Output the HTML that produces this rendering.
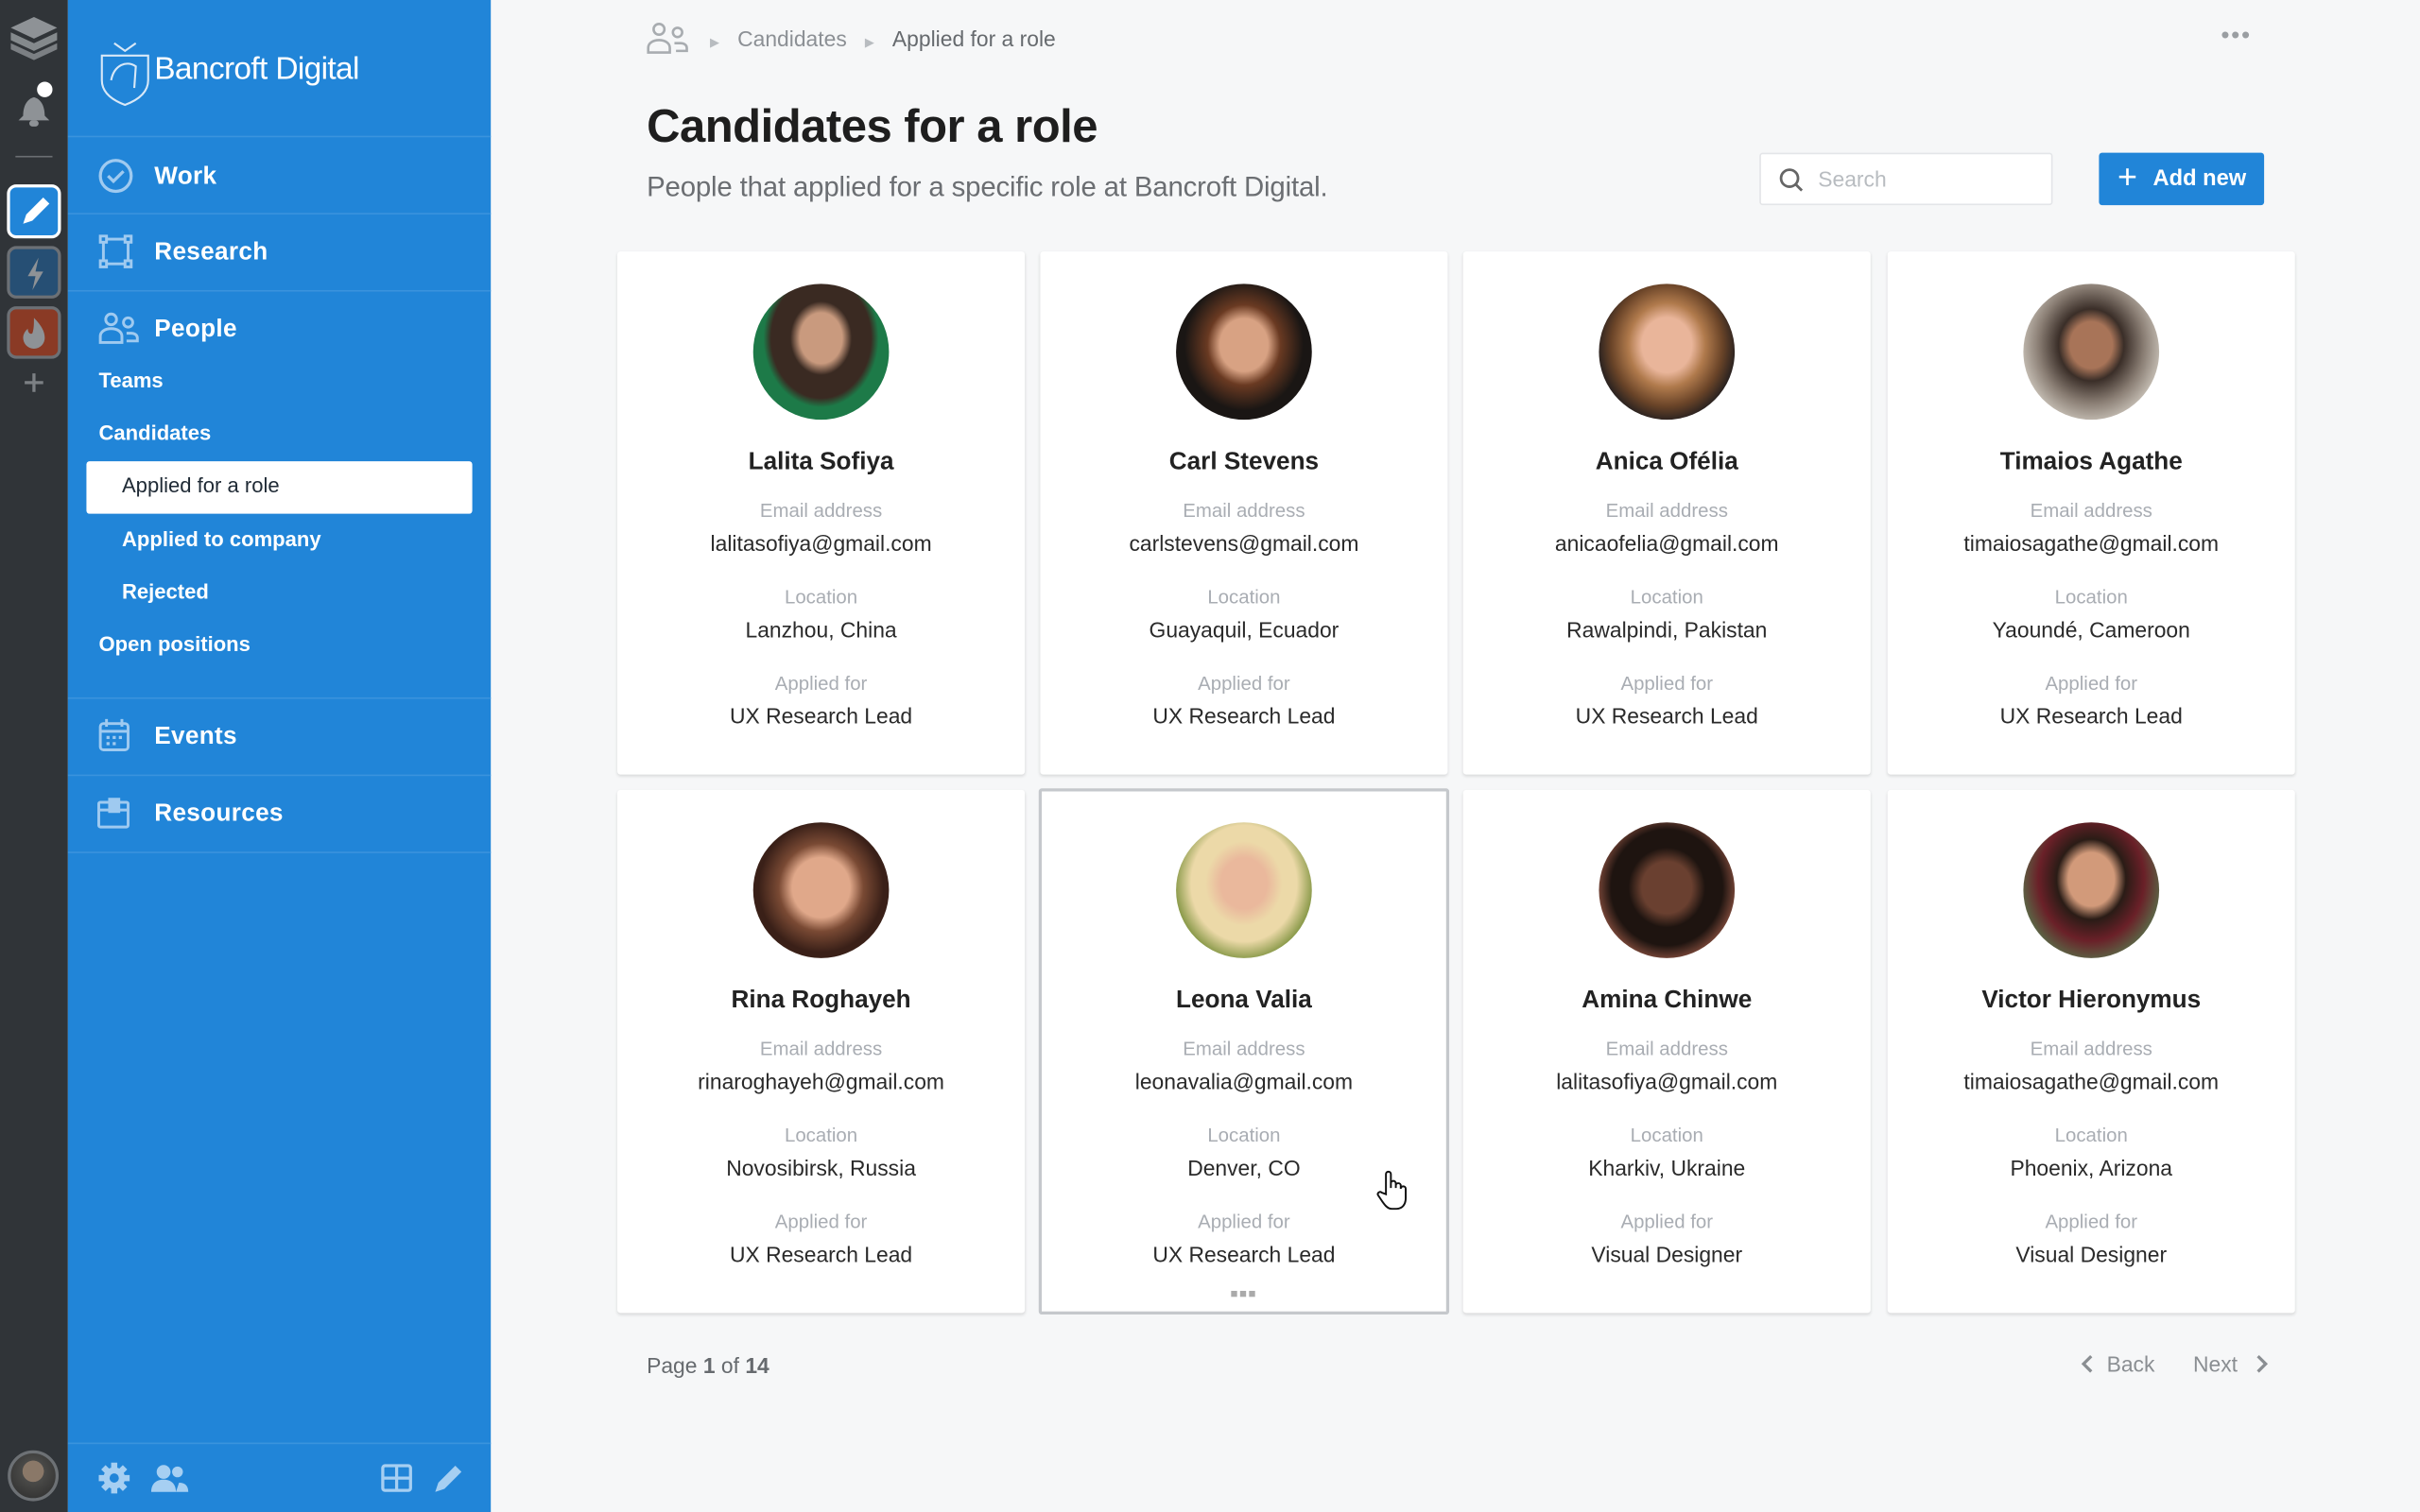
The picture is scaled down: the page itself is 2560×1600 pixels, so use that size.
<!DOCTYPE html>
<html><head><meta charset="utf-8"><style>
*{box-sizing:border-box;margin:0;padding:0}
html,body{width:2560px;height:1600px;overflow:hidden;background:#f6f7f8}
#w{position:absolute;left:0;top:0;width:1568px;height:980px;transform:scale(1.632653);transform-origin:0 0;font-family:"Liberation Sans",sans-serif;background:#f6f7f8}
.rail{position:absolute;left:0;top:0;width:44px;height:980px;background:#303438}
.side{position:absolute;left:44px;top:0;width:274px;height:980px;background:#2185d8;color:#fff}
.sep{position:absolute;left:0;width:274px;height:1px;background:#3a93dd}
.nav{position:absolute;left:56px;font-size:16px;font-weight:bold;letter-spacing:.2px}
.sub{position:absolute;left:20px;font-size:13.5px;font-weight:bold}
.sel{position:absolute;left:12px;top:299px;width:250px;height:34px;background:#fff;border-radius:2px}
.card{position:absolute;width:264px;height:339px;background:#fff;border-radius:2px;box-shadow:0 1px 2px rgba(0,0,0,.12);text-align:center}
.av{position:absolute;left:88px;top:21px;width:88px;height:88px;border-radius:50%}
.nm{position:absolute;left:0;right:0;top:128px;font-size:16px;font-weight:bold;color:#222}
.lb{position:absolute;left:0;right:0;font-size:12.5px;color:#a9adb3}
.vl{position:absolute;left:0;right:0;font-size:14px;color:#2a2a2a}
</style></head><body><div id="w">
<div class="rail">
<svg width="44" height="300" style="position:absolute;left:0;top:0">
<g fill="#8e9296"><path d="M22 11l15 7-15 7-15-7z"/><path d="M7 21l15 7 15-7v5l-15 7-15-7z" opacity=".9"/><path d="M7 28l15 7 15-7v4l-15 7-15-7z" opacity=".8"/>
<path d="M15 75c0-7 3-11 7-12 4 1 7 5 7 12l3 3H12z"/><rect x="19" y="78" width="6" height="4" rx="2"/></g>
<circle cx="29" cy="58" r="5" fill="#fff"/>
<rect x="10" y="101" width="24" height="1" fill="#6a6e72"/>
<rect x="5.5" y="120.5" width="33" height="33" rx="5" fill="#2185d8" stroke="#fff" stroke-width="2"/>
<path d="M15 145l2-6 11-11 4 4-11 11z" fill="#fff"/>
<rect x="5.5" y="160.5" width="33" height="32" rx="5" fill="#264f74" stroke="#6c7075" stroke-width="2"/>
<path d="M25 167l-7 12h5l-2 9 7-12h-5z" fill="#8e9296"/>
<rect x="5.5" y="199.5" width="33" height="32" rx="5" fill="#8a3a25" stroke="#6c7075" stroke-width="2"/>
<path d="M22 206c5 5 7 9 7 13a7 7 0 0 1-14 0c0-3 2-5 3-6 0 3 2 4 3 3 1-3 1-6 1-10z" fill="#8e9296"/>
<path d="M22 242v12M16 248h12" stroke="#7c8084" stroke-width="2"/>
</svg>
<div style="position:absolute;left:5px;top:940px;width:33px;height:33px;border-radius:50%;border:2px solid #6d7175;background:radial-gradient(circle at 50% 40%,#8a7868 0 30%,#4a4a48 31%,#2b2b2b)"></div>
</div>
<div class="side">
<svg width="40" height="48" style="position:absolute;left:18px;top:22px" fill="none" stroke="#d8e8f7" stroke-width="1.3"><path d="M4 14h30v16c0 8-7 13-15 16-8-3-15-8-15-16z"/><path d="M10 30c2-10 10-13 16-9l-1 14"/><path d="M12 6l7 5 7-5"/></svg>
<div style="position:absolute;left:56px;top:33px;font-size:20.5px;letter-spacing:-.4px">Bancroft Digital</div>
<div class="sep" style="top:88px"></div>
<svg width="24" height="24" style="position:absolute;left:19px;top:102px" fill="none" stroke="#9fcaf0" stroke-width="2"><circle cx="12" cy="12" r="10"/><path d="M7 12l3.5 3.5L17 9"/></svg>
<div class="nav" style="top:106px">Work</div>
<div class="sep" style="top:138px"></div>
<svg width="24" height="24" style="position:absolute;left:20px;top:152px" fill="none" stroke="#9fcaf0" stroke-width="1.8"><rect x="3" y="3" width="16" height="16"/><rect x="1" y="1" width="4" height="4" fill="#2185d8"/><rect x="17" y="1" width="4" height="4" fill="#2185d8"/><rect x="1" y="17" width="4" height="4" fill="#2185d8"/><rect x="17" y="17" width="4" height="4" fill="#2185d8"/></svg>
<div class="nav" style="top:155px">Research</div>
<div class="sep" style="top:188px"></div>
<svg width="28" height="24" style="position:absolute;left:19px;top:202px" fill="none" stroke="#9fcaf0" stroke-width="1.8"><circle cx="9" cy="5" r="3.5"/><circle cx="20" cy="7" r="3"/><path d="M2 20v-4c0-3 3-5 7-5s7 2 7 5v4zM19 14h3c2 0 4 1 4 3v2h-7"/></svg>
<div class="nav" style="top:205px">People</div>
<div class="sub" style="top:239px">Teams</div>
<div class="sub" style="top:273px">Candidates</div>
<div class="sel"></div>
<div class="sub" style="top:307px;left:35px;color:#1f2a35;font-weight:normal">Applied for a role</div>
<div class="sub" style="top:342px;left:35px">Applied to company</div>
<div class="sub" style="top:376px;left:35px">Rejected</div>
<div class="sub" style="top:410px">Open positions</div>
<div class="sep" style="top:452px"></div>
<svg width="22" height="24" style="position:absolute;left:19px;top:465px" fill="none" stroke="#9fcaf0" stroke-width="1.8"><rect x="2" y="4" width="18" height="17" rx="2"/><path d="M2 9h18M6 1v5M16 1v5"/><g fill="#9fcaf0" stroke="none"><rect x="6" y="12" width="2" height="2"/><rect x="10" y="12" width="2" height="2"/><rect x="14" y="12" width="2" height="2"/><rect x="6" y="16" width="2" height="2"/><rect x="10" y="16" width="2" height="2"/></g></svg>
<div class="nav" style="top:469px">Events</div>
<div class="sep" style="top:502px"></div>
<svg width="22" height="22" style="position:absolute;left:19px;top:516px" fill="none" stroke="#9fcaf0" stroke-width="1.8"><rect x="1" y="4" width="19" height="16" rx="1"/><path d="M1 9h19"/><rect x="8" y="2" width="6" height="8" fill="#9fcaf0"/></svg>
<div class="nav" style="top:519px">Resources</div>
<div class="sep" style="top:552px"></div>
<div class="sep" style="top:935px"></div>
<svg width="274" height="30" style="position:absolute;left:0;top:943px" fill="#a6cff2">
<circle cx="30" cy="15" r="7"/><g stroke="#a6cff2" stroke-width="4"><path d="M30 5v20M20 15h20M23 8l14 14M37 8L23 22"/></g><circle cx="30" cy="15" r="3" fill="#2185d8"/>
<circle cx="62" cy="11" r="4.5"/><circle cx="71" cy="11" r="3.5"/><path d="M54 24c0-6 4-8 8-8s8 2 8 8zM70 24h8c0-4-2-6-6-6z"/>
<rect x="204" y="7" width="18" height="16" rx="1.5" fill="none" stroke="#a6cff2" stroke-width="2"/><path d="M213 7v16M204 15h18" stroke="#a6cff2" stroke-width="2"/>
<path d="M238 24l2-6 11-11 4 4-11 11z"/>
</svg>
</div>
<svg width="28" height="22" style="position:absolute;left:419px;top:14px" fill="none" stroke="#a8acb0" stroke-width="1.6"><circle cx="8" cy="5" r="3.5"/><circle cx="20" cy="7" r="3"/><path d="M1 20v-3c0-3 3-5 7-5s7 2 7 5v3zM18 14h4c2 0 4 1 4 3v2h-7"/></svg>
<div style="position:absolute;left:460px;top:17px;font-size:14px;color:#8c9095"><span style="font-size:8px;color:#b8bcc0">▶</span>&nbsp;&nbsp;&nbsp;Candidates&nbsp;&nbsp;&nbsp;<span style="font-size:8px;color:#b8bcc0">▶</span>&nbsp;&nbsp;&nbsp;<span style="color:#666a6e">Applied for a role</span></div>
<div style="position:absolute;left:1439px;top:15px;font-size:16px;color:#9a9ea2;letter-spacing:1px">•••</div>
<div style="position:absolute;left:419px;top:66px;font-size:30px;font-weight:bold;color:#1e1e1e;letter-spacing:-.3px">Candidates for a role</div>
<div style="position:absolute;left:419px;top:111px;font-size:18px;color:#6b6e72;letter-spacing:-.1px">People that applied for a specific role at Bancroft Digital.</div>
<div style="position:absolute;left:1140px;top:99px;width:190px;height:34px;background:#fff;border:1px solid #e3e5e8;border-radius:2px"><svg width="18" height="18" style="position:absolute;left:11px;top:8px" fill="none" stroke="#666" stroke-width="1.7"><circle cx="7.5" cy="7.5" r="5.5"/><path d="M11.5 11.5l4 4"/></svg><span style="position:absolute;left:37px;top:8px;font-size:14px;color:#b8bcc0">Search</span></div>
<div style="position:absolute;left:1360px;top:99px;width:107px;height:34px;background:#2185d8;border-radius:2px;color:#fff;font-size:14.5px;font-weight:bold"><span style="position:absolute;left:12px;top:3px;font-size:22px;font-weight:normal">+</span><span style="position:absolute;left:35px;top:9px">Add new</span></div>

<div class="card" style="left:400px;top:163px"><div class="av" style="background:radial-gradient(ellipse at 50% 40%,#c99a7e 0 22%,#3a2a22 32% 52%,#1d7a48 60% 75%,#9aa29a 85%)"></div><div class="nm">Lalita Sofiya</div><div class="lb" style="top:161px">Email address</div><div class="vl" style="top:181px">lalitasofiya@gmail.com</div><div class="lb" style="top:217px">Location</div><div class="vl" style="top:237px">Lanzhou, China</div><div class="lb" style="top:273px">Applied for</div><div class="vl" style="top:293px">UX Research Lead</div></div>
<div class="card" style="left:674px;top:163px"><div class="av" style="background:radial-gradient(ellipse at 50% 45%,#d8a283 0 25%,#6a3a22 38%,#1a1614 62%)"></div><div class="nm">Carl Stevens</div><div class="lb" style="top:161px">Email address</div><div class="vl" style="top:181px">carlstevens@gmail.com</div><div class="lb" style="top:217px">Location</div><div class="vl" style="top:237px">Guayaquil, Ecuador</div><div class="lb" style="top:273px">Applied for</div><div class="vl" style="top:293px">UX Research Lead</div></div>
<div class="card" style="left:948px;top:163px"><div class="av" style="background:radial-gradient(ellipse at 50% 45%,#e9b59a 0 26%,#b07a4c 40%,#6a4428 58%,#2a2220 72%)"></div><div class="nm">Anica Ofélia</div><div class="lb" style="top:161px">Email address</div><div class="vl" style="top:181px">anicaofelia@gmail.com</div><div class="lb" style="top:217px">Location</div><div class="vl" style="top:237px">Rawalpindi, Pakistan</div><div class="lb" style="top:273px">Applied for</div><div class="vl" style="top:293px">UX Research Lead</div></div>
<div class="card" style="left:1223px;top:163px"><div class="av" style="background:radial-gradient(ellipse at 50% 45%,#a87458 0 22%,#3a2e28 34%,#8a7e74 55%,#c9c2b8 75%)"></div><div class="nm">Timaios Agathe</div><div class="lb" style="top:161px">Email address</div><div class="vl" style="top:181px">timaiosagathe@gmail.com</div><div class="lb" style="top:217px">Location</div><div class="vl" style="top:237px">Yaoundé, Cameroon</div><div class="lb" style="top:273px">Applied for</div><div class="vl" style="top:293px">UX Research Lead</div></div>

<div class="card" style="left:400px;top:512px"><div class="av" style="background:radial-gradient(ellipse at 50% 48%,#e0a88a 0 30%,#7a4a34 44%,#3a2018 65%)"></div><div class="nm">Rina Roghayeh</div><div class="lb" style="top:161px">Email address</div><div class="vl" style="top:181px">rinaroghayeh@gmail.com</div><div class="lb" style="top:217px">Location</div><div class="vl" style="top:237px">Novosibirsk, Russia</div><div class="lb" style="top:273px">Applied for</div><div class="vl" style="top:293px">UX Research Lead</div></div>
<div class="card" style="left:673px;top:511px;width:266px;height:341px;border:2px solid #c5c8cc;box-shadow:none"><div class="av" style="left:87px;top:20px;background:radial-gradient(ellipse at 50% 45%,#eab89c 0 24%,#ecd9a8 40% 55%,#8a9a4a 72%)"></div><div class="nm" style="top:127px">Leona Valia</div><div class="lb" style="top:160px">Email address</div><div class="vl" style="top:180px">leonavalia@gmail.com</div><div class="lb" style="top:216px">Location</div><div class="vl" style="top:236px">Denver, CO</div><div class="lb" style="top:272px">Applied for</div><div class="vl" style="top:292px">UX Research Lead</div><div style="position:absolute;left:0;right:0;top:321px;font-size:8px;color:#aaa;letter-spacing:1px">■■■</div>
<svg width="26" height="30" style="position:absolute;left:216px;top:244px" fill="#fff" stroke="#111" stroke-width="1.2"><path d="M7 17V4a1.6 1.6 0 0 1 3.2 0v9V10a1.6 1.6 0 0 1 3.2 0v3-1.5a1.6 1.6 0 0 1 3.2 0v2a1.6 1.6 0 0 1 3.2 0v6c0 4-2 7-6 7h-3c-3 0-5-3-7-6l-2-3a1.5 1.5 0 0 1 2.5-1.5z"/></svg></div>
<div class="card" style="left:948px;top:512px"><div class="av" style="background:radial-gradient(ellipse at 50% 48%,#6a4030 0 26%,#1e1410 40% 58%,#8a5040 75%)"></div><div class="nm">Amina Chinwe</div><div class="lb" style="top:161px">Email address</div><div class="vl" style="top:181px">lalitasofiya@gmail.com</div><div class="lb" style="top:217px">Location</div><div class="vl" style="top:237px">Kharkiv, Ukraine</div><div class="lb" style="top:273px">Applied for</div><div class="vl" style="top:293px">Visual Designer</div></div>
<div class="card" style="left:1223px;top:512px"><div class="av" style="background:radial-gradient(ellipse at 50% 42%,#d29a7a 0 24%,#2a1c16 36%,#6a2028 55%,#5a6a48 75%)"></div><div class="nm">Victor Hieronymus</div><div class="lb" style="top:161px">Email address</div><div class="vl" style="top:181px">timaiosagathe@gmail.com</div><div class="lb" style="top:217px">Location</div><div class="vl" style="top:237px">Phoenix, Arizona</div><div class="lb" style="top:273px">Applied for</div><div class="vl" style="top:293px">Visual Designer</div></div>

<div style="position:absolute;left:419px;top:877px;font-size:14px;color:#666a6e">Page <b>1</b> of <b>14</b></div>
<svg width="12" height="14" style="position:absolute;left:1347px;top:877px" fill="none" stroke="#8a8e92" stroke-width="2"><path d="M8 2L3 7l5 5"/></svg>
<div style="position:absolute;left:1365px;top:876px;font-size:14px;color:#8a8e92">Back</div>
<div style="position:absolute;left:1421px;top:876px;font-size:14px;color:#8a8e92">Next</div>
<svg width="12" height="14" style="position:absolute;left:1459px;top:877px" fill="none" stroke="#8a8e92" stroke-width="2"><path d="M4 2l5 5-5 5"/></svg>
</div></body></html>
